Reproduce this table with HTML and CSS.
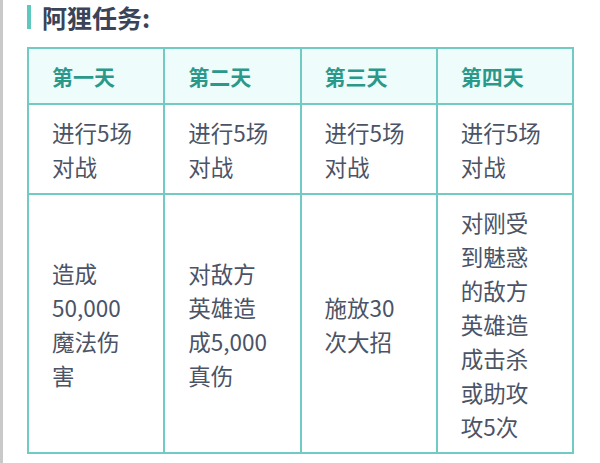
FILE: index.html
```html
<!DOCTYPE html>
<html lang="zh">
<head>
<meta charset="utf-8">
<link rel="stylesheet" href="styles.css">
</head>
<body>
<div class="page">
  <h2 class="title">阿狸任务:</h2>
  <table class="tasks">
    <colgroup><col><col><col><col></colgroup>
    <thead>
      <tr><th>第一天</th><th>第二天</th><th>第三天</th><th>第四天</th></tr>
    </thead>
    <tbody>
      <tr class="r2">
        <td>进行5场<br>对战</td>
        <td>进行5场<br>对战</td>
        <td>进行5场<br>对战</td>
        <td>进行5场<br>对战</td>
      </tr>
      <tr class="r3">
        <td>造成<br>50,000<br>魔法伤<br>害</td>
        <td>对敌方<br>英雄造<br>成5,000<br>真伤</td>
        <td>施放30<br>次大招</td>
        <td>对刚受<br>到魅惑<br>的敌方<br>英雄造<br>成击杀<br>或助攻<br>攻5次</td>
      </tr>
    </tbody>
  </table>
</div>
</body>
</html>
```
FILE: styles.css
```css
html, body {
  margin: 0;
  padding: 0;
  background: #ffffff;
}
body {
  font-family: "Noto Sans CJK SC", "Noto Sans", sans-serif;
}
.page {
  border-left: 3px solid #c9c9c9;
  height: 463px;
  box-sizing: border-box;
  padding: 0 0 0 24px;
}
.title {
  margin: 0;
  padding: 5px 0 0 0;
  height: 47px;
  box-sizing: border-box;
  display: flex;
  align-items: flex-start;
  gap: 11px;
  font-size: 25px;
  font-weight: bold;
  color: #3a4357;
  line-height: 24px;
}
.title::before {
  content: "";
  flex: none;
  width: 4px;
  height: 24px;
  background: #5ec8bf;
}
.tasks {
  border-collapse: collapse;
  width: 547px;
  table-layout: fixed;
}
.tasks th, .tasks td {
  border: 2px solid #72cbc2;
  text-align: left;
  padding: 0 0 0 23px;
  vertical-align: middle;
}
.tasks th {
  background: #effcfc;
  color: #2a998a;
  font-size: 21px;
  font-weight: bold;
  height: 54px;
}
.tasks td {
  color: #4b5366;
  font-size: 22.5px;
  line-height: 34px;
}
.r2 td { height: 88px; }
.r3 td { height: 257px; }
```
